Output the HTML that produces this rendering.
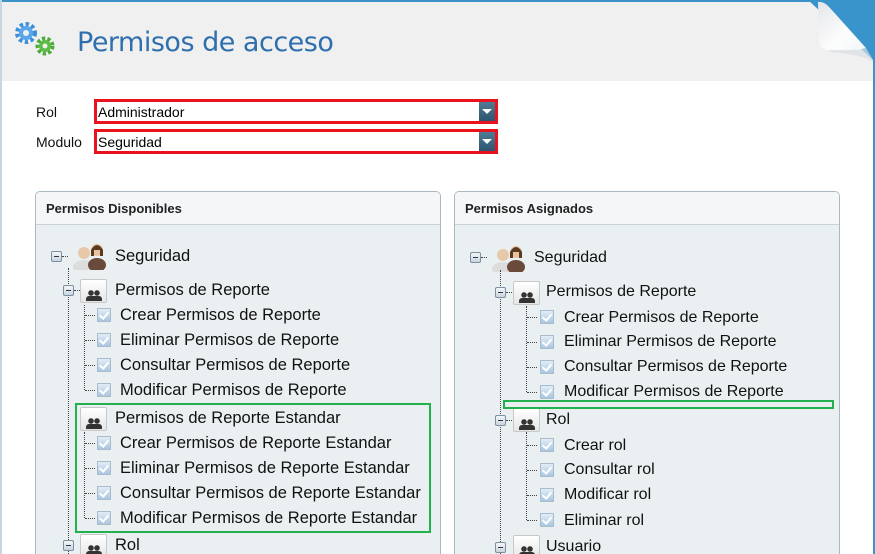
<!DOCTYPE html>
<html><head><meta charset="utf-8"><style>
*{margin:0;padding:0;box-sizing:border-box}
html,body{width:875px;height:554px;overflow:hidden}
body{background:#fff;font-family:"Liberation Sans",Arial,sans-serif;position:relative}
.a{position:absolute}
.t{position:absolute;font-size:16.5px;color:#111;white-space:nowrap;line-height:18px}
.r .t{font-size:16px}
.mn{position:absolute;width:11px;height:11px;border:1px solid #7d8fa0;background:linear-gradient(#f4f7f9,#c9d4dc);border-radius:2px}
.mn:after{content:"";position:absolute;left:2px;top:4px;width:5px;height:1px;background:#334}
.cb{position:absolute;width:14px;height:14px;border:1px solid #a9bccc;background:linear-gradient(#e3edf6,#a9c6e2)}
.cb:after{content:"";position:absolute;left:3px;top:1px;width:4px;height:7px;border-right:2px solid #fff;border-bottom:2px solid #fff;transform:rotate(40deg)}
.vl{position:absolute;border-left:1px dotted #444;width:0}
.hl{position:absolute;border-top:1px dotted #444;height:0}
.fd{position:absolute;width:27px;height:24px;border:1px solid #c8c8c8;background:linear-gradient(#fff,#e6e6e6);border-radius:2px}
.fd:after{content:"";position:absolute;left:6px;top:10px;width:14px;height:10px;background:radial-gradient(circle at 4px 3px,#333 2.5px,transparent 3px),radial-gradient(circle at 10px 3px,#333 2.5px,transparent 3px);}
.fd:before{content:"";position:absolute;left:5px;top:16px;width:16px;height:5px;background:#333;border-radius:3px 3px 0 0}
.panel{position:absolute;border:1px solid #a9b9c0;border-bottom:none;border-radius:5px 5px 0 0;background:#eaf0f2;overflow:hidden}
.ph{height:33px;background:#f4f6f7;border-bottom:1px solid #c9d2d6;font-weight:bold;font-size:13px;color:#222;padding:9px 0 0 10px}
.sel{position:absolute;left:94px;width:404px;height:25px;border:3px solid #e8131f;background:#fff;font-size:14px;padding:2px 0 0 1px;color:#000}
.sel b{position:absolute;right:0;top:0;width:16px;height:19px;background:linear-gradient(#4f7a94,#2c5670)}
.sel b:after{content:"";position:absolute;left:3px;top:7px;border-left:5px solid transparent;border-right:5px solid transparent;border-top:5px solid #fff}
</style></head><body>
<div class="a" style="left:0;top:0;width:875px;height:2px;background:#3b92c9"></div>
<div class="a" style="left:0;top:0;width:2px;height:554px;background:#c6d6df"></div>
<div class="a" style="left:2px;top:2px;width:871px;height:79px;background:#f0f0f0"></div>
<svg class="a" style="left:800px;top:0" width="75" height="82">
<defs><linearGradient id="cg" x1="0" y1="0" x2="1" y2="1"><stop offset="0" stop-color="#e4e6ea"/><stop offset="0.6" stop-color="#fdfdfd"/><stop offset="1" stop-color="#f0f6fa"/></linearGradient></defs>
<polygon points="8,0 75,0 75,82 73,82 73,60" fill="#3a94cc"/>
<path d="M18,2 Q24,1 30,8 L66,48 Q58,51 30,50 Q19,50 19,40 Z" fill="url(#cg)"/>
<path d="M30,50 Q58,51 66,48 L73,60 L73,62 Q60,54 30,52 Z" fill="#d9dde2" opacity=".7"/>
</svg>
<div class="a" style="left:873px;top:60px;width:2px;height:494px;background:#3a94cc"></div>
<svg class="a" style="left:12px;top:20px" width="50" height="40"><circle cx="14" cy="13" r="8" fill="none" stroke="#3d8fdc" stroke-width="6" stroke-dasharray="3 2.3"/><circle cx="14" cy="13" r="7" fill="#5aa6ec"/><circle cx="14" cy="13" r="3" fill="#f0f0f0"/><circle cx="33" cy="26" r="7" fill="none" stroke="#4caa3a" stroke-width="5" stroke-dasharray="3 2"/><circle cx="33" cy="26" r="6" fill="#5cbc44"/><circle cx="33" cy="26" r="2.5" fill="#f0f0f0"/></svg>
<div class="a" style="left:77px;top:27px;font-size:27px;color:#2f6fad;font-family:'DejaVu Sans','Liberation Sans',sans-serif;letter-spacing:-0.5px">Permisos de acceso</div>
<div class="t" style="left:36px;top:103px;font-size:14px">Rol</div>
<div class="t" style="left:36px;top:133px;font-size:14px">Modulo</div>
<div class="sel" style="top:99px">Administrador<b></b></div>
<div class="sel" style="top:129px">Seguridad<b></b></div>

<div class="panel" style="left:35px;top:191px;width:406px;height:363px"><div class="ph">Permisos Disponibles</div></div>
<div class="panel r" style="left:454px;top:191px;width:386px;height:363px"><div class="ph">Permisos Asignados</div></div>

<div>
<div class="mn" style="left:51px;top:251px"></div><div class="hl" style="left:62px;top:256px;width:6px"></div>
<svg class="a" style="left:72px;top:238px" width="36" height="32"><ellipse cx="12" cy="29" rx="11" ry="7" fill="#ddd"/><circle cx="12" cy="15" r="6" fill="#e7c9a9"/><ellipse cx="25" cy="27" rx="9" ry="7" fill="#6a4a3a"/><circle cx="25" cy="12" r="6" fill="#e9c4a0"/><path d="M19 12q6-10 12 0v6h-3v-6h-6v6h-3z" fill="#5b3a22"/></svg>
<div class="t" style="left:115px;top:247px">Seguridad</div>
<div class="vl" style="left:68px;top:268px;height:286px"></div>
<div class="mn" style="left:63px;top:285px"></div><div class="hl" style="left:74px;top:290px;width:6px"></div>
<div class="fd" style="left:80px;top:279px"></div>
<div class="t" style="left:115px;top:281px">Permisos de Reporte</div>
<div class="vl" style="left:84px;top:305px;height:85px"></div>
<div class="hl" style="left:85px;top:315px;width:10px"></div><div class="cb" style="left:97px;top:308px"></div><div class="t" style="left:120px;top:306px">Crear Permisos de Reporte</div>
<div class="hl" style="left:85px;top:340px;width:10px"></div><div class="cb" style="left:97px;top:333px"></div><div class="t" style="left:120px;top:331px">Eliminar Permisos de Reporte</div>
<div class="hl" style="left:85px;top:365px;width:10px"></div><div class="cb" style="left:97px;top:358px"></div><div class="t" style="left:120px;top:356px">Consultar Permisos de Reporte</div>
<div class="hl" style="left:85px;top:390px;width:10px"></div><div class="cb" style="left:97px;top:383px"></div><div class="t" style="left:120px;top:381px">Modificar Permisos de Reporte</div>
<div class="fd" style="left:80px;top:407px"></div>
<div class="t" style="left:115px;top:409px">Permisos de Reporte Estandar</div>
<div class="vl" style="left:84px;top:432px;height:86px"></div>
<div class="hl" style="left:85px;top:443px;width:10px"></div><div class="cb" style="left:97px;top:436px"></div><div class="t" style="left:120px;top:434px">Crear Permisos de Reporte Estandar</div>
<div class="hl" style="left:85px;top:468px;width:10px"></div><div class="cb" style="left:97px;top:461px"></div><div class="t" style="left:120px;top:459px">Eliminar Permisos de Reporte Estandar</div>
<div class="hl" style="left:85px;top:493px;width:10px"></div><div class="cb" style="left:97px;top:486px"></div><div class="t" style="left:120px;top:484px">Consultar Permisos de Reporte Estandar</div>
<div class="hl" style="left:85px;top:518px;width:10px"></div><div class="cb" style="left:97px;top:511px"></div><div class="t" style="left:120px;top:509px">Modificar Permisos de Reporte Estandar</div>
<div class="mn" style="left:63px;top:540px"></div><div class="fd" style="left:80px;top:534px"></div>
<div class="t" style="left:115px;top:536px">Rol</div>
<div class="a" style="left:75px;top:403px;width:356px;height:130px;border:2px solid #22b14c"></div>
</div>

<div class="r">
<div class="mn" style="left:470px;top:252px"></div><div class="hl" style="left:481px;top:257px;width:6px"></div>
<svg class="a" style="left:491px;top:240px" width="36" height="32"><ellipse cx="12" cy="29" rx="11" ry="7" fill="#ddd"/><circle cx="12" cy="15" r="6" fill="#e7c9a9"/><ellipse cx="25" cy="27" rx="9" ry="7" fill="#6a4a3a"/><circle cx="25" cy="12" r="6" fill="#e9c4a0"/><path d="M19 12q6-10 12 0v6h-3v-6h-6v6h-3z" fill="#5b3a22"/></svg>
<div class="t" style="left:534px;top:249px">Seguridad</div>
<div class="vl" style="left:500px;top:270px;height:284px"></div>
<div class="mn" style="left:495px;top:287px"></div><div class="hl" style="left:506px;top:292px;width:6px"></div>
<div class="fd" style="left:513px;top:281px"></div>
<div class="t" style="left:546px;top:283px">Permisos de Reporte</div>
<div class="vl" style="left:526px;top:306px;height:86px"></div>
<div class="hl" style="left:527px;top:317px;width:10px"></div><div class="cb" style="left:540px;top:310px"></div><div class="t" style="left:564px;top:309px">Crear Permisos de Reporte</div>
<div class="hl" style="left:527px;top:342px;width:10px"></div><div class="cb" style="left:540px;top:335px"></div><div class="t" style="left:564px;top:333px">Eliminar Permisos de Reporte</div>
<div class="hl" style="left:527px;top:367px;width:10px"></div><div class="cb" style="left:540px;top:360px"></div><div class="t" style="left:564px;top:358px">Consultar Permisos de Reporte</div>
<div class="hl" style="left:527px;top:392px;width:10px"></div><div class="cb" style="left:540px;top:385px"></div><div class="t" style="left:564px;top:383px">Modificar Permisos de Reporte</div>
<div class="mn" style="left:495px;top:415px"></div><div class="hl" style="left:506px;top:420px;width:6px"></div>
<div class="fd" style="left:513px;top:408px"></div>
<div class="t" style="left:546px;top:411px">Rol</div>
<div class="vl" style="left:526px;top:432px;height:88px"></div>
<div class="hl" style="left:527px;top:445px;width:10px"></div><div class="cb" style="left:540px;top:438px"></div><div class="t" style="left:564px;top:437px">Crear rol</div>
<div class="hl" style="left:527px;top:470px;width:10px"></div><div class="cb" style="left:540px;top:463px"></div><div class="t" style="left:564px;top:461px">Consultar rol</div>
<div class="hl" style="left:527px;top:495px;width:10px"></div><div class="cb" style="left:540px;top:488px"></div><div class="t" style="left:564px;top:486px">Modificar rol</div>
<div class="hl" style="left:527px;top:520px;width:10px"></div><div class="cb" style="left:540px;top:513px"></div><div class="t" style="left:564px;top:512px">Eliminar rol</div>
<div class="mn" style="left:495px;top:542px"></div><div class="fd" style="left:513px;top:535px"></div>
<div class="t" style="left:546px;top:538px">Usuario</div>
<div class="a" style="left:503px;top:400px;width:331px;height:9px;border:2px solid #22b14c"></div>
</div>
</body></html>
